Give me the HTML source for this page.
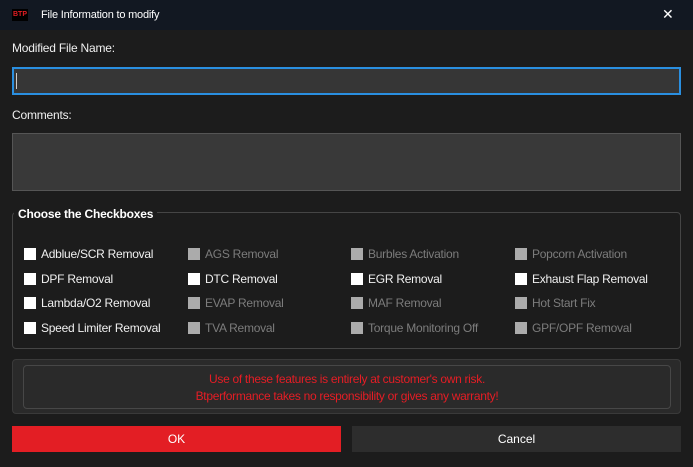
<!DOCTYPE html>
<html><head><style>
*{margin:0;padding:0;box-sizing:border-box}
body{width:693px;height:467px;background:#1c1c1c;font-family:"Liberation Sans",sans-serif;color:#f0f0f0;position:relative;overflow:hidden;font-size:12px}
.a{position:absolute}
.cb{position:absolute;font-size:12px;white-space:nowrap;line-height:14px;letter-spacing:-0.25px}
.cb i{display:inline-block;width:12px;height:12px;background:#fff;vertical-align:-2px;margin-right:5px}
.cb.d{color:#7c7c7c}.cb.d i{background:#d0d0d0;opacity:.8}
</style></head><body>
<div class="a" style="left:0;top:0;width:693px;height:30px;background:#121822"></div>
<div class="a" style="left:12px;top:9px;width:16px;height:12px;background:#000;color:#e31e24;font-size:7px;font-weight:bold;line-height:12px;text-align:center">BTP</div>
<div class="a" style="left:41px;top:9px;font-size:11px;color:#fff;letter-spacing:-0.2px">File Information to modify</div>
<div class="a" style="left:662px;top:6px;font-size:14px;color:#fff">✕</div>
<div class="a" style="left:12px;top:41px;letter-spacing:-0.2px">Modified File Name:</div>
<div class="a" style="left:12px;top:67px;width:669px;height:28px;background:#363636;border:2px solid #2a8fe0"></div>
<div class="a" style="left:16px;top:73px;width:1px;height:16px;background:#ccc"></div>
<div class="a" style="left:12px;top:108px;letter-spacing:-0.2px">Comments:</div>
<div class="a" style="left:12px;top:133px;width:669px;height:58px;background:#393939;border:1px solid #555"></div>
<div class="a" style="left:12px;top:212px;width:669px;height:137px;border:1px solid #454545;border-radius:4px"></div>
<div class="a" style="left:14px;top:207px;background:#1c1c1c;padding:0 4px;font-weight:bold;color:#fff;letter-spacing:-0.2px">Choose the Checkboxes</div>
<div class="cb" style="left:24px;top:247px"><i></i>Adblue/SCR Removal</div>
<div class="cb d" style="left:188px;top:247px"><i></i>AGS Removal</div>
<div class="cb d" style="left:351px;top:247px"><i></i>Burbles Activation</div>
<div class="cb d" style="left:515px;top:247px"><i></i>Popcorn Activation</div>
<div class="cb" style="left:24px;top:272px"><i></i>DPF Removal</div>
<div class="cb" style="left:188px;top:272px"><i></i>DTC Removal</div>
<div class="cb" style="left:351px;top:272px"><i></i>EGR Removal</div>
<div class="cb" style="left:515px;top:272px"><i></i>Exhaust Flap Removal</div>
<div class="cb" style="left:24px;top:296px"><i></i>Lambda/O2 Removal</div>
<div class="cb d" style="left:188px;top:296px"><i></i>EVAP Removal</div>
<div class="cb d" style="left:351px;top:296px"><i></i>MAF Removal</div>
<div class="cb d" style="left:515px;top:296px"><i></i>Hot Start Fix</div>
<div class="cb" style="left:24px;top:321px"><i></i>Speed Limiter Removal</div>
<div class="cb d" style="left:188px;top:321px"><i></i>TVA Removal</div>
<div class="cb d" style="left:351px;top:321px"><i></i>Torque Monitoring Off</div>
<div class="cb d" style="left:515px;top:321px"><i></i>GPF/OPF Removal</div>
<div class="a" style="left:12px;top:359px;width:669px;height:55px;background:#2a2a2a;border:1px solid #3a3a3a;border-radius:4px"></div>
<div class="a" style="left:23px;top:365px;width:648px;height:44px;border:1px solid #474747;border-radius:4px;color:#e51d25;text-align:center;font-size:12px;line-height:17px;padding-top:5px;letter-spacing:-0.3px">Use of these features is entirely at customer's own risk.<br>Btperformance takes no responsibility or gives any warranty!</div>
<div class="a" style="left:12px;top:426px;width:329px;height:26px;background:#e31e24;text-align:center;line-height:26px;color:#fff">OK</div>
<div class="a" style="left:352px;top:426px;width:329px;height:26px;background:#2d2d2d;text-align:center;line-height:26px;color:#fff">Cancel</div>
</body></html>
